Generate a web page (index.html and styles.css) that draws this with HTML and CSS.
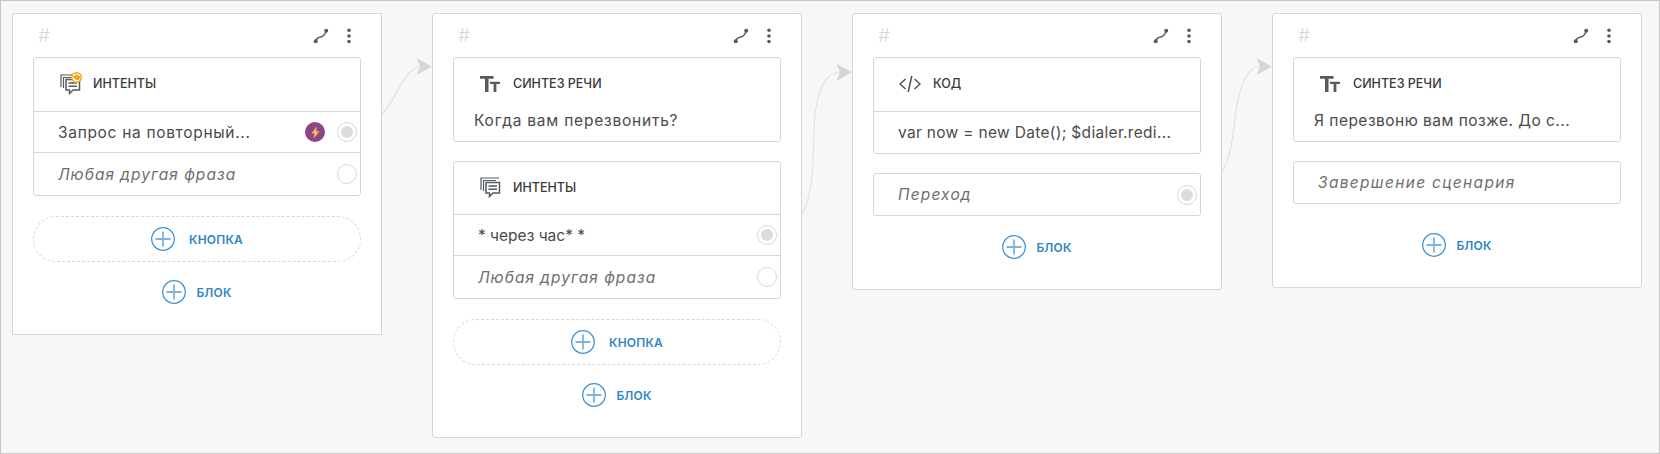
FILE: index.html
```html
<!DOCTYPE html>
<html lang="ru">
<head>
<meta charset="utf-8">
<title>Сценарий</title>
<link rel="stylesheet" href="styles.css">
</head>
<body>
<svg class="defs" width="0" height="0" aria-hidden="true">
  <symbol id="i-route" viewBox="0 0 16 16">
    <path d="M2.7 13.3c.3-3 2.300-3.700 5-4.300 2.600-.6 4.300-2 5.500-6.300" fill="none" stroke="#555a5e" stroke-width="1.400"/>
    <circle cx="2.700" cy="13.300" r="2" fill="#555a5e"/>
    <circle cx="13.200" cy="2.700" r="2" fill="#555a5e"/>
  </symbol>
  <symbol id="i-kebab" viewBox="0 0 16 16">
    <circle cx="8" cy="2.300" r="1.800" fill="#555a5e"/>
    <circle cx="8" cy="8" r="1.800" fill="#555a5e"/>
    <circle cx="8" cy="13.500" r="1.800" fill="#555a5e"/>
  </symbol>
  <symbol id="i-intents" viewBox="0 0 22 22">
    <path d="M20 2H2v12" fill="none" stroke="#555a5e" stroke-width="1.200"/>
    <path d="M17 4.500H4.500V15" fill="none" stroke="#555a5e" stroke-width="1.200"/>
    <path d="M7 6.500h13.500v10.500h-6.500l-3.500 3.500v-3.500H7z" fill="#fff" stroke="#555a5e" stroke-width="1.500"/>
    <path d="M9.500 10h8.500M9.500 13.300h8.500" stroke="#555a5e" stroke-width="1.400"/>
  </symbol>
  <symbol id="i-text" viewBox="0 0 20 16">
    <path d="M0 0h13.500v2.800H8.500V16H5V2.800H0z" fill="#555a5e"/>
    <path d="M10 5.800h10v2.200h-3.600V16h-2.800V8H10z" fill="#555a5e"/>
  </symbol>
  <symbol id="i-code" viewBox="0 0 22 18">
    <path d="M6.500 4 1 9l5.500 5M15.500 4 21 9l-5.500 5M12.800 1 9.200 17" fill="none" stroke="#4d5256" stroke-width="1.500"/>
  </symbol>
  <symbol id="i-plus" viewBox="0 0 24 24">
    <circle cx="12" cy="12" r="11.300" fill="none" stroke="#3a8fd2" stroke-width="1.200"/>
    <path d="M12 4.500v15M4.500 12h15" stroke="#7db3e0" stroke-width="1.800"/>
  </symbol>
</svg>

<main class="canvas">
  <svg class="links" viewBox="0 0 1660 454" width="1660" height="454" aria-hidden="true">
    <g fill="none" stroke="#e2e2e2" stroke-width="1.200">
      <path d="M381 115C397 100 404 67 421 66.500"/>
      <path d="M801 216C817 190 812 140 815 115 818 88 826 72 841 72"/>
      <path d="M1221 174C1235 150 1233 120 1238 100 1243 78 1250 66 1261 66.500"/>
    </g>
    <g fill="#d6d6d6">
      <path d="M432 66.500 416.500 58 420 66.500 416.500 75z"/>
      <path d="M852 72 836.500 64 840 72 836.500 81z"/>
      <path d="M1272 66.500 1256.500 58 1260 66.500 1256.500 75z"/>
    </g>
  </svg>

  <section class="card card-1 card-square">
    <header class="card-top">
      <span class="hash">#</span>
      <span class="card-tools">
        <svg class="tool"><use href="#i-route"/></svg>
        <svg class="tool"><use href="#i-kebab"/></svg>
      </span>
    </header>
    <div class="block">
      <div class="block-head">
        <span class="head-icon">
          <svg class="icon-intents"><use href="#i-intents"/></svg>
          <svg class="icon-badge" viewBox="0 0 10 10">
            <circle cx="5" cy="5" r="4.300" fill="#fff" stroke="#f5a511" stroke-width="1.400"/>
            <path d="M1.500 4.500 5 2l3.500 2-1.500 3.500-2.500-.5z" fill="#f5a511"/>
          </svg>
        </span>
        <span class="head-label">Интенты</span>
      </div>
      <div class="row row-divided">
        <span class="row-text row-snug">Запрос на повторный...</span>
        <span class="bolt">
          <svg class="bolt-icon" viewBox="0 0 10 14"><path d="M6.500 0 0.500 8h3.300L2.800 14 9.500 5.500H5.800z" fill="#f8bb57"/></svg>
        </span>
        <span class="port port-on"></span>
      </div>
      <div class="row row-divided row-last">
        <span class="row-text row-muted">Любая другая фраза</span>
        <span class="port"></span>
      </div>
    </div>
    <button class="add-button"><svg class="plus"><use href="#i-plus"/></svg><span class="add-label">Кнопка</span></button>
    <button class="add-block"><svg class="plus"><use href="#i-plus"/></svg><span class="add-label">Блок</span></button>
  </section>

  <section class="card card-2">
    <header class="card-top">
      <span class="hash">#</span>
      <span class="card-tools">
        <svg class="tool"><use href="#i-route"/></svg>
        <svg class="tool"><use href="#i-kebab"/></svg>
      </span>
    </header>
    <div class="block">
      <div class="block-head">
        <span class="head-icon"><svg class="icon-text"><use href="#i-text"/></svg></span>
        <span class="head-label">Синтез речи</span>
      </div>
      <p class="speech">Когда вам перезвонить?</p>
    </div>
    <div class="block block-next">
      <div class="block-head">
        <span class="head-icon"><svg class="icon-intents"><use href="#i-intents"/></svg></span>
        <span class="head-label">Интенты</span>
      </div>
      <div class="row row-divided">
        <span class="row-text row-tight">* через час* *</span>
        <span class="port port-on"></span>
      </div>
      <div class="row row-divided row-last">
        <span class="row-text row-muted">Любая другая фраза</span>
        <span class="port"></span>
      </div>
    </div>
    <button class="add-button"><svg class="plus"><use href="#i-plus"/></svg><span class="add-label">Кнопка</span></button>
    <button class="add-block"><svg class="plus"><use href="#i-plus"/></svg><span class="add-label">Блок</span></button>
  </section>

  <section class="card card-3">
    <header class="card-top">
      <span class="hash">#</span>
      <span class="card-tools">
        <svg class="tool"><use href="#i-route"/></svg>
        <svg class="tool"><use href="#i-kebab"/></svg>
      </span>
    </header>
    <div class="block">
      <div class="block-head">
        <span class="head-icon"><svg class="icon-code"><use href="#i-code"/></svg></span>
        <span class="head-label">Код</span>
      </div>
      <div class="row row-divided row-last">
        <span class="row-text row-code">var now = new Date(); $dialer.redi...</span>
      </div>
    </div>
    <div class="block block-next">
      <div class="row row-single">
        <span class="row-text row-muted row-wide">Переход</span>
        <span class="port port-on"></span>
      </div>
    </div>
    <button class="add-block"><svg class="plus"><use href="#i-plus"/></svg><span class="add-label">Блок</span></button>
  </section>

  <section class="card card-4">
    <header class="card-top">
      <span class="hash">#</span>
      <span class="card-tools">
        <svg class="tool"><use href="#i-route"/></svg>
        <svg class="tool"><use href="#i-kebab"/></svg>
      </span>
    </header>
    <div class="block">
      <div class="block-head">
        <span class="head-icon"><svg class="icon-text"><use href="#i-text"/></svg></span>
        <span class="head-label">Синтез речи</span>
      </div>
      <p class="speech speech-tight">Я перезвоню вам позже. До с...</p>
    </div>
    <div class="block block-next">
      <div class="row row-single">
        <span class="row-text row-muted row-widest">Завершение сценария</span>
      </div>
    </div>
    <button class="add-block add-block-far"><svg class="plus"><use href="#i-plus"/></svg><span class="add-label">Блок</span></button>
  </section>
</main>
</body>
</html>
```

FILE: styles.css
```css
* { box-sizing: border-box; }

html, body {
  margin: 0;
  padding: 0;
}

body {
  font-family: Inter, "Noto Sans", sans-serif;
  color: #555;
}

.defs { position: absolute; }

.canvas {
  position: relative;
  width: 1660px;
  height: 454px;
  background: #f7f7f7;
  border: 1px solid #c6c6c6;
  overflow: hidden;
}

.links {
  position: absolute;
  left: -1px;
  top: -1px;
}

.card {
  position: absolute;
  top: 12px;
  width: 370px;
  padding: 0 20px 30px;
  background: #fff;
  border: 1px solid #d6d6d6;
  border-radius: 3px;
}

.card-square { border-radius: 0; }
.card-1 { left: 11px; }
.card-2 { left: 431px; }
.card-3 { left: 851px; }
.card-4 { left: 1271px; }

.card-top {
  display: flex;
  align-items: center;
  justify-content: space-between;
  height: 43px;
  padding: 0 4px 0 5px;
}

.hash {
  font-size: 19px;
  font-weight: 300;
  line-height: 1;
  color: #d6d6d6;
}

.card-tools {
  display: flex;
  align-items: center;
  gap: 12px;
}

.tool {
  display: block;
  width: 16px;
  height: 16px;
}

.block {
  background: #fff;
  border: 1px solid #d6d6d6;
  border-radius: 3px;
}

.block-next { margin-top: 19px; }

.block-head {
  display: flex;
  align-items: center;
  height: 53px;
  padding: 0 0 2px 25px;
  gap: 12px;
}

.block-next .block-head { height: 52px; }

.head-icon {
  position: relative;
  display: flex;
  align-items: center;
  justify-content: center;
  width: 22px;
  height: 22px;
}

.icon-intents {
  width: 22px;
  height: 22px;
}

.icon-badge {
  position: absolute;
  right: -1px;
  top: -1px;
  width: 11px;
  height: 11px;
}

.icon-text {
  width: 20px;
  height: 16px;
}

.icon-code {
  width: 22px;
  height: 18px;
}

.head-label {
  font-size: 12.500px;
  font-weight: 500;
  color: #3a3a3a;
  text-transform: uppercase;
}

.speech {
  margin: 0;
  padding: 0 20px 10px;
  font-size: 15.500px;
  line-height: 20px;
  letter-spacing: 0.780px;
  color: #4a4a4a;
}

.speech-tight { letter-spacing: 0.480px; }

.row {
  display: flex;
  align-items: center;
  height: 41px;
  padding: 0 3px 0 24px;
}

.row-divided { border-top: 1px solid #d6d6d6; }
.row-last { height: 43px; }
.row-single { height: 41px; }
.card-3 .row-last { height: 42px; }

.row-text {
  flex: 1;
  font-size: 15.500px;
  letter-spacing: 0.780px;
  color: #4a4a4a;
  white-space: nowrap;
}

.row-snug { letter-spacing: 0.680px; }
.row-code { letter-spacing: 0.310px; }
.row-tight { letter-spacing: 0; }

.row-muted {
  font-style: italic;
  letter-spacing: 1px;
  color: #6e6e6e;
}

.row-wide { letter-spacing: 1.150px; }
.row-widest { letter-spacing: 1.320px; }

.bolt {
  display: flex;
  align-items: center;
  justify-content: center;
  width: 20px;
  height: 20px;
  margin-right: 12px;
  background: #8e4585;
  border-radius: 50%;
}

.bolt-icon {
  width: 9px;
  height: 13px;
}

.port {
  display: flex;
  align-items: center;
  justify-content: center;
  width: 20px;
  height: 20px;
  background: #fff;
  border: 1px solid #d8d8d8;
  border-radius: 50%;
}

.port-on::before {
  content: "";
  width: 12px;
  height: 12px;
  background: #dcdcdc;
  border-radius: 50%;
}

.add-button,
.add-block {
  display: flex;
  align-items: center;
  justify-content: center;
  width: 100%;
  padding: 0;
  background: none;
  font: inherit;
  cursor: pointer;
}

.add-button {
  height: 46px;
  margin-top: 20px;
  gap: 14px;
  border: 1px dashed #d8d8d8;
  border-radius: 23px;
}

.add-block {
  height: 24px;
  margin-top: 18px;
  gap: 10px;
  border: 0;
}

.card-3 .add-block { margin-top: 19px; }
.card-4 .add-block-far { margin-top: 29px; }

.plus {
  display: block;
  width: 24px;
  height: 24px;
}

.add-label {
  font-size: 12px;
  font-weight: 600;
  letter-spacing: 0.200px;
  color: #2f86c9;
  text-transform: uppercase;
}
```
